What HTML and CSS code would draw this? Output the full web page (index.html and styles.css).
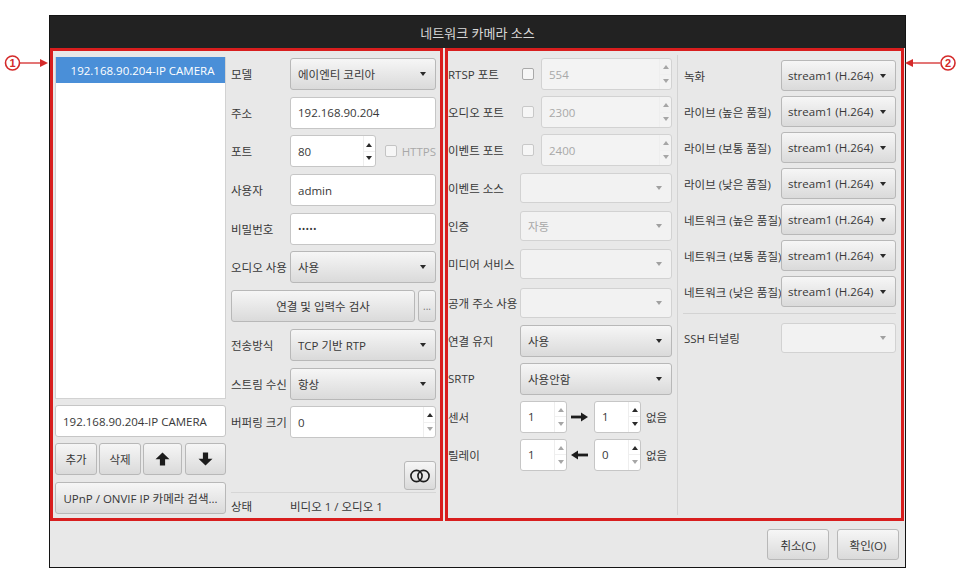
FILE: index.html
```html
<!DOCTYPE html>
<html lang="ko">
<head>
<meta charset="utf-8">
<title>네트워크 카메라 소스</title>
<link rel="stylesheet" href="styles.css">
</head>
<body>
<div class="mark mark-1">
  <svg width="50" height="18" viewBox="0 0 50 18">
    <circle cx="12.5" cy="9" r="7" fill="#fff" stroke="#d42a2a" stroke-width="1.6"/>
    <text x="12.5" y="13" text-anchor="middle" class="mark-num">1</text>
    <line x1="20" y1="9" x2="41" y2="9" stroke="#d42a2a" stroke-width="1.3"/>
    <polygon points="40,5 48,9 40,13" fill="#d42a2a"/>
  </svg>
</div>
<div class="mark mark-2">
  <svg width="54" height="18" viewBox="0 0 54 18">
    <polygon points="9,5 1,9 9,13" fill="#d42a2a"/>
    <line x1="8" y1="9" x2="36" y2="9" stroke="#d42a2a" stroke-width="1.3"/>
    <circle cx="44" cy="9" r="7" fill="#fff" stroke="#d42a2a" stroke-width="1.6"/>
    <text x="44" y="13" text-anchor="middle" class="mark-num">2</text>
  </svg>
</div>

<div class="dialog">
  <div class="titlebar">네트워크 카메라 소스</div>
  <div class="content">
    <section class="pane pane-1">
      <div class="cams">
        <div class="list"><div class="list-item sel">192.168.90.204-IP CAMERA</div></div>
        <div class="field entry">192.168.90.204-IP CAMERA</div>
        <div class="btn-row">
          <button class="btn b-add">추가</button>
          <button class="btn b-del">삭제</button>
          <button class="btn b-up"><svg width="15" height="14" viewBox="0 0 15 14"><path d="M7.5 0.5 L14.5 7.2 L10.1 7.2 L10.1 13.5 L4.9 13.5 L4.9 7.2 L0.5 7.2 Z" fill="#1c1c1c"/></svg></button>
          <button class="btn b-down"><svg width="15" height="14" viewBox="0 0 15 14"><path d="M7.5 13.5 L14.5 6.8 L10.1 6.8 L10.1 0.5 L4.9 0.5 L4.9 6.8 L0.5 6.8 Z" fill="#1c1c1c"/></svg></button>
        </div>
        <button class="btn upnp">UPnP / ONVIF IP 카메라 검색...</button>
      </div>
      <div class="form">
        <div class="rows">
          <div class="row"><span class="lbl">모델</span><div class="combo"><span class="ctext">에이엔티 코리아</span></div></div>
          <div class="row"><span class="lbl">주소</span><div class="field grow">192.168.90.204</div></div>
          <div class="row"><span class="lbl">포트</span>
            <div class="spin port"><span class="val">80</span><span class="arr"><i class="up"></i><i class="down"></i></span></div>
            <span class="check port-check"></span><span class="dim https">HTTPS</span>
          </div>
          <div class="row"><span class="lbl">사용자</span><div class="field grow">admin</div></div>
          <div class="row"><span class="lbl">비밀번호</span><div class="field grow"><span class="pw">•••••</span></div></div>
          <div class="row"><span class="lbl">오디오 사용</span><div class="combo"><span class="ctext">사용</span></div></div>
          <div class="row"><button class="btn check-btn">연결 및 입력수 검사</button><button class="btn more-btn">...</button></div>
          <div class="row"><span class="lbl">전송방식</span><div class="combo"><span class="ctext">TCP 기반 RTP</span></div></div>
          <div class="row"><span class="lbl">스트림 수신</span><div class="combo"><span class="ctext">항상</span></div></div>
          <div class="row"><span class="lbl">버퍼링 크기</span>
            <div class="spin grow"><span class="val">0</span><span class="arr"><i class="up"></i><i class="down off"></i></span></div>
          </div>
        </div>
        <div class="toggle-row">
          <button class="btn toggle-btn"><svg width="22" height="14" viewBox="0 0 22 14"><circle cx="7.5" cy="7" r="5.6" fill="none" stroke="#1c1c1c" stroke-width="1.6"/><circle cx="14.5" cy="7" r="5.6" fill="none" stroke="#1c1c1c" stroke-width="1.6"/></svg></button>
        </div>
        <div class="status"><span class="lbl">상태</span><span>비디오 1 / 오디오 1</span></div>
      </div>
    </section>

    <section class="pane pane-2">
      <div class="col-a">
        <div class="row"><span class="lbl-a">RTSP 포트</span><span class="check"></span>
          <div class="spin dis wide"><span class="val">554</span><span class="arr"><i class="up off"></i><i class="down off"></i></span></div></div>
        <div class="row"><span class="lbl-a">오디오 포트</span><span class="check light"></span>
          <div class="spin dis wide"><span class="val">2300</span><span class="arr"><i class="up off"></i><i class="down off"></i></span></div></div>
        <div class="row"><span class="lbl-a">이벤트 포트</span><span class="check light"></span>
          <div class="spin dis wide"><span class="val">2400</span><span class="arr"><i class="up off"></i><i class="down off"></i></span></div></div>
        <div class="row"><span class="lbl-a">이벤트 소스</span><div class="combo flat"><span class="ctext"></span></div></div>
        <div class="row"><span class="lbl-a">인증</span><div class="combo flat"><span class="ctext">자동</span></div></div>
        <div class="row"><span class="lbl-a">미디어 서비스</span><div class="combo flat"><span class="ctext"></span></div></div>
        <div class="row"><span class="lbl-a">공개 주소 사용</span><div class="combo flat"><span class="ctext"></span></div></div>
        <div class="row"><span class="lbl-a">연결 유지</span><div class="combo"><span class="ctext">사용</span></div></div>
        <div class="row"><span class="lbl-a">SRTP</span><div class="combo"><span class="ctext">사용안함</span></div></div>
        <div class="row"><span class="lbl-a">센서</span>
          <div class="spin small"><span class="val">1</span><span class="arr"><i class="up off"></i><i class="down off"></i></span></div>
          <svg class="io-arrow" width="17" height="10" viewBox="0 0 17 10"><rect x="0" y="3.6" width="11" height="2.8" fill="#1c1c1c"/><polygon points="10,0.5 17,5 10,9.5" fill="#1c1c1c"/></svg>
          <div class="spin small"><span class="val">1</span><span class="arr"><i class="up"></i><i class="down"></i></span></div>
          <span class="none">없음</span>
        </div>
        <div class="row"><span class="lbl-a">릴레이</span>
          <div class="spin small"><span class="val">1</span><span class="arr"><i class="up off"></i><i class="down off"></i></span></div>
          <svg class="io-arrow" width="17" height="10" viewBox="0 0 17 10"><rect x="6" y="3.6" width="11" height="2.8" fill="#1c1c1c"/><polygon points="7,0.5 0,5 7,9.5" fill="#1c1c1c"/></svg>
          <div class="spin small"><span class="val">0</span><span class="arr"><i class="up"></i><i class="down off"></i></span></div>
          <span class="none">없음</span>
        </div>
      </div>
      <div class="vsep"></div>
      <div class="col-b">
        <div class="row-b"><span class="lbl-b">녹화</span><div class="combo"><span class="ctext">stream1 (H.264)</span></div></div>
        <div class="row-b"><span class="lbl-b">라이브 (높은 품질)</span><div class="combo"><span class="ctext">stream1 (H.264)</span></div></div>
        <div class="row-b"><span class="lbl-b">라이브 (보통 품질)</span><div class="combo"><span class="ctext">stream1 (H.264)</span></div></div>
        <div class="row-b"><span class="lbl-b">라이브 (낮은 품질)</span><div class="combo"><span class="ctext">stream1 (H.264)</span></div></div>
        <div class="row-b"><span class="lbl-b">네트워크 (높은 품질)</span><div class="combo"><span class="ctext">stream1 (H.264)</span></div></div>
        <div class="row-b"><span class="lbl-b">네트워크 (보통 품질)</span><div class="combo"><span class="ctext">stream1 (H.264)</span></div></div>
        <div class="row-b"><span class="lbl-b">네트워크 (낮은 품질)</span><div class="combo"><span class="ctext">stream1 (H.264)</span></div></div>
        <div class="hsep"></div>
        <div class="row-b ssh"><span class="lbl-b">SSH 터널링</span><div class="combo flat"><span class="ctext"></span></div></div>
      </div>
    </section>
  </div>
  <div class="footer">
    <button class="btn foot-btn">취소(C)</button>
    <button class="btn foot-btn">확인(O)</button>
  </div>
</div>
</body>
</html>
```
FILE: styles.css
```css
* { box-sizing: border-box; }

body {
  margin: 0;
  background: #fff;
  font-family: "Open Sans", "Noto Sans CJK KR", sans-serif;
  font-size: 11.5px;
  color: #383838;
  position: relative;
}

/* annotation markers */
.mark { position: absolute; top: 54px; line-height: 0; }
.mark-1 { left: 0; }
.mark-2 { left: 904px; }
.mark-num { font: bold 11px "Liberation Sans", sans-serif; fill: #d42a2a; }

.dialog {
  margin: 15px 0 0 49px;
  width: 857px;
  border: 1px solid #141414;
  background: #e8e8e8;
}

.titlebar {
  height: 32px;
  background: #222;
  color: #d8d8d8;
  font-size: 13px;
  display: flex;
  align-items: center;
  justify-content: center;
}

.content {
  display: flex;
  gap: 2px;
  height: 473px;
}

.pane {
  border: 3px solid #d81e1e;
  height: 100%;
}

/* ---------- pane 1 ---------- */
.pane-1 {
  width: 393px;
  display: grid;
  grid-template-columns: 171px 205px;
  column-gap: 5px;
  padding: 6px 4px 3px 2px;
}

.cams {
  display: flex;
  flex-direction: column;
}

.list {
  height: 342px;
  background: #fff;
  border: 1px solid #d2d2d2;
  border-top: none;
}

.list-item {
  height: 26px;
  display: flex;
  align-items: center;
  justify-content: center;
  padding-left: 4px;
}

.list-item.sel {
  background: #4a8fd8;
  color: #fff;
}

.entry { margin-top: 6px; }

.btn-row {
  margin-top: 6px;
  display: flex;
  gap: 2px;
}

.btn {
  font: inherit;
  color: #383838;
  height: 32px;
  padding: 0;
  border: 1px solid #b8b8b8;
  border-radius: 3px;
  background: linear-gradient(#f6f6f6, #dadada);
  display: flex;
  align-items: center;
  justify-content: center;
}

.b-add, .b-del { width: 42px; }
.b-up { width: 39px; }
.b-down { width: 41px; margin-left: 1px; }

.upnp {
  margin-top: 7px;
  width: 100%;
}

.form {
  display: flex;
  flex-direction: column;
}

.rows {
  display: flex;
  flex-direction: column;
  gap: 6.7px;
  padding-top: 1px;
}

.row {
  height: 32px;
  display: flex;
  align-items: center;
}

.lbl {
  width: 59px;
  flex-shrink: 0;
  white-space: nowrap;
}

.field {
  height: 32px;
  background: #fff;
  border: 1px solid #c6c6c6;
  border-radius: 3px;
  padding: 0 7px;
  display: flex;
  align-items: center;
  white-space: nowrap;
}

.grow { flex: 1; }

.pw { font-size: 9.5px; letter-spacing: 0.2px; }

.combo {
  flex: 1;
  height: 32px;
  border: 1px solid #b8b8b8;
  border-radius: 3px;
  background: linear-gradient(#f6f6f6, #dadada);
  padding: 0 9px 0 7px;
  display: flex;
  align-items: center;
  white-space: nowrap;
}

.combo::after {
  content: "";
  width: 0;
  height: 0;
  border-left: 3.5px solid transparent;
  border-right: 3.5px solid transparent;
  border-top: 4.5px solid #2a2a2a;
  margin-left: auto;
}

.ctext { flex: 1; }

.combo.flat {
  height: 30px;
  background: #f2f2f2;
  border-color: #d2d2d2;
  color: #a8a8a8;
}

.combo.flat::after { border-top-color: #a0a0a0; }

/* spin boxes */
.spin {
  height: 32px;
  background: #fff;
  border: 1px solid #c6c6c6;
  border-radius: 3px;
  display: flex;
}

.spin .val {
  flex: 1;
  padding-left: 7px;
  align-self: center;
}

.spin .arr {
  width: 12px;
  display: flex;
  flex-direction: column;
  border-left: 1px solid #eeeeee;
}

.spin .arr i {
  flex: 1;
  display: flex;
  align-items: center;
  justify-content: center;
}

.spin .arr i::before {
  content: "";
  width: 0;
  height: 0;
  border-left: 3px solid transparent;
  border-right: 3px solid transparent;
}

.spin .arr i.up { border-bottom: 1px solid #f0f0f0; }
.spin .arr i.up::before { border-bottom: 4px solid #2a2a2a; margin-top: 2px; }
.spin .arr i.down::before { border-top: 4px solid #2a2a2a; margin-bottom: 2px; }
.spin .arr i.up.off::before { border-bottom-color: #a6a6a6; }
.spin .arr i.down.off::before { border-top-color: #a6a6a6; }

.spin.dis {
  background: #f3f3f3;
  border-color: #d2d2d2;
  color: #a8a8a8;
}

.spin.port { width: 86px; }

.check {
  width: 12px;
  height: 12px;
  border: 1px solid #a9a9a9;
  border-radius: 2px;
  background: #f6f6f6;
  flex-shrink: 0;
}

.check.light { border-color: #c8c8c8; }

.port-check { margin-left: 9px; border-color: #c4c4c4; }

.dim { color: #a8a8a8; }
.https { margin-left: 5px; }

.check-btn { width: 184px; }
.more-btn { width: 18px; margin-left: 3px; color: #777; font-size: 10px; }

.toggle-row {
  margin-top: 23px;
  display: flex;
  justify-content: flex-end;
}

.toggle-btn {
  width: 32px;
  height: 29px;
}

.status {
  margin-top: 2px;
  border-top: 1px solid #d6d6d6;
  flex: 1;
  display: flex;
  align-items: center;
  padding-top: 3px;
}

/* ---------- pane 2 ---------- */
.pane-2 {
  width: 459px;
  display: flex;
  padding: 0 5px 3px 0;
}

.col-a {
  width: 224px;
  flex-shrink: 0;
  padding-top: 7px;
  display: flex;
  flex-direction: column;
  gap: 6.1px;
}

.lbl-a {
  width: 72px;
  flex-shrink: 0;
  white-space: nowrap;
}

.col-a .check { margin-left: 2px; }
.spin.wide { margin-left: 7px; flex: 1; }
.spin.small { width: 47px; }

.io-arrow { margin: 0 6px 0 4px; flex-shrink: 0; }
.none { margin-left: 5px; }

.vsep {
  width: 1px;
  background: #d3d3d3;
  margin: 4px 5px 0 5px;
  flex-shrink: 0;
}

.col-b {
  flex: 1;
  padding-top: 9px;
  display: flex;
  flex-direction: column;
  gap: 5px;
}

.row-b {
  height: 31px;
  display: flex;
  align-items: center;
}

.row-b .combo { height: 31px; padding-left: 6px; }
.row-b .combo.flat { height: 30px; }

.lbl-b {
  width: 98px;
  flex-shrink: 0;
  padding-left: 1px;
  white-space: nowrap;
}

.hsep {
  height: 1px;
  background: #d3d3d3;
  margin-top: 1px;
}

.ssh { margin-top: 3px; }

/* ---------- footer ---------- */
.footer {
  height: 46px;
  display: flex;
  justify-content: flex-end;
  align-items: flex-start;
  gap: 8px;
  padding: 8px 6px 0 0;
}

.foot-btn {
  width: 62px;
  height: 31px;
}
```
